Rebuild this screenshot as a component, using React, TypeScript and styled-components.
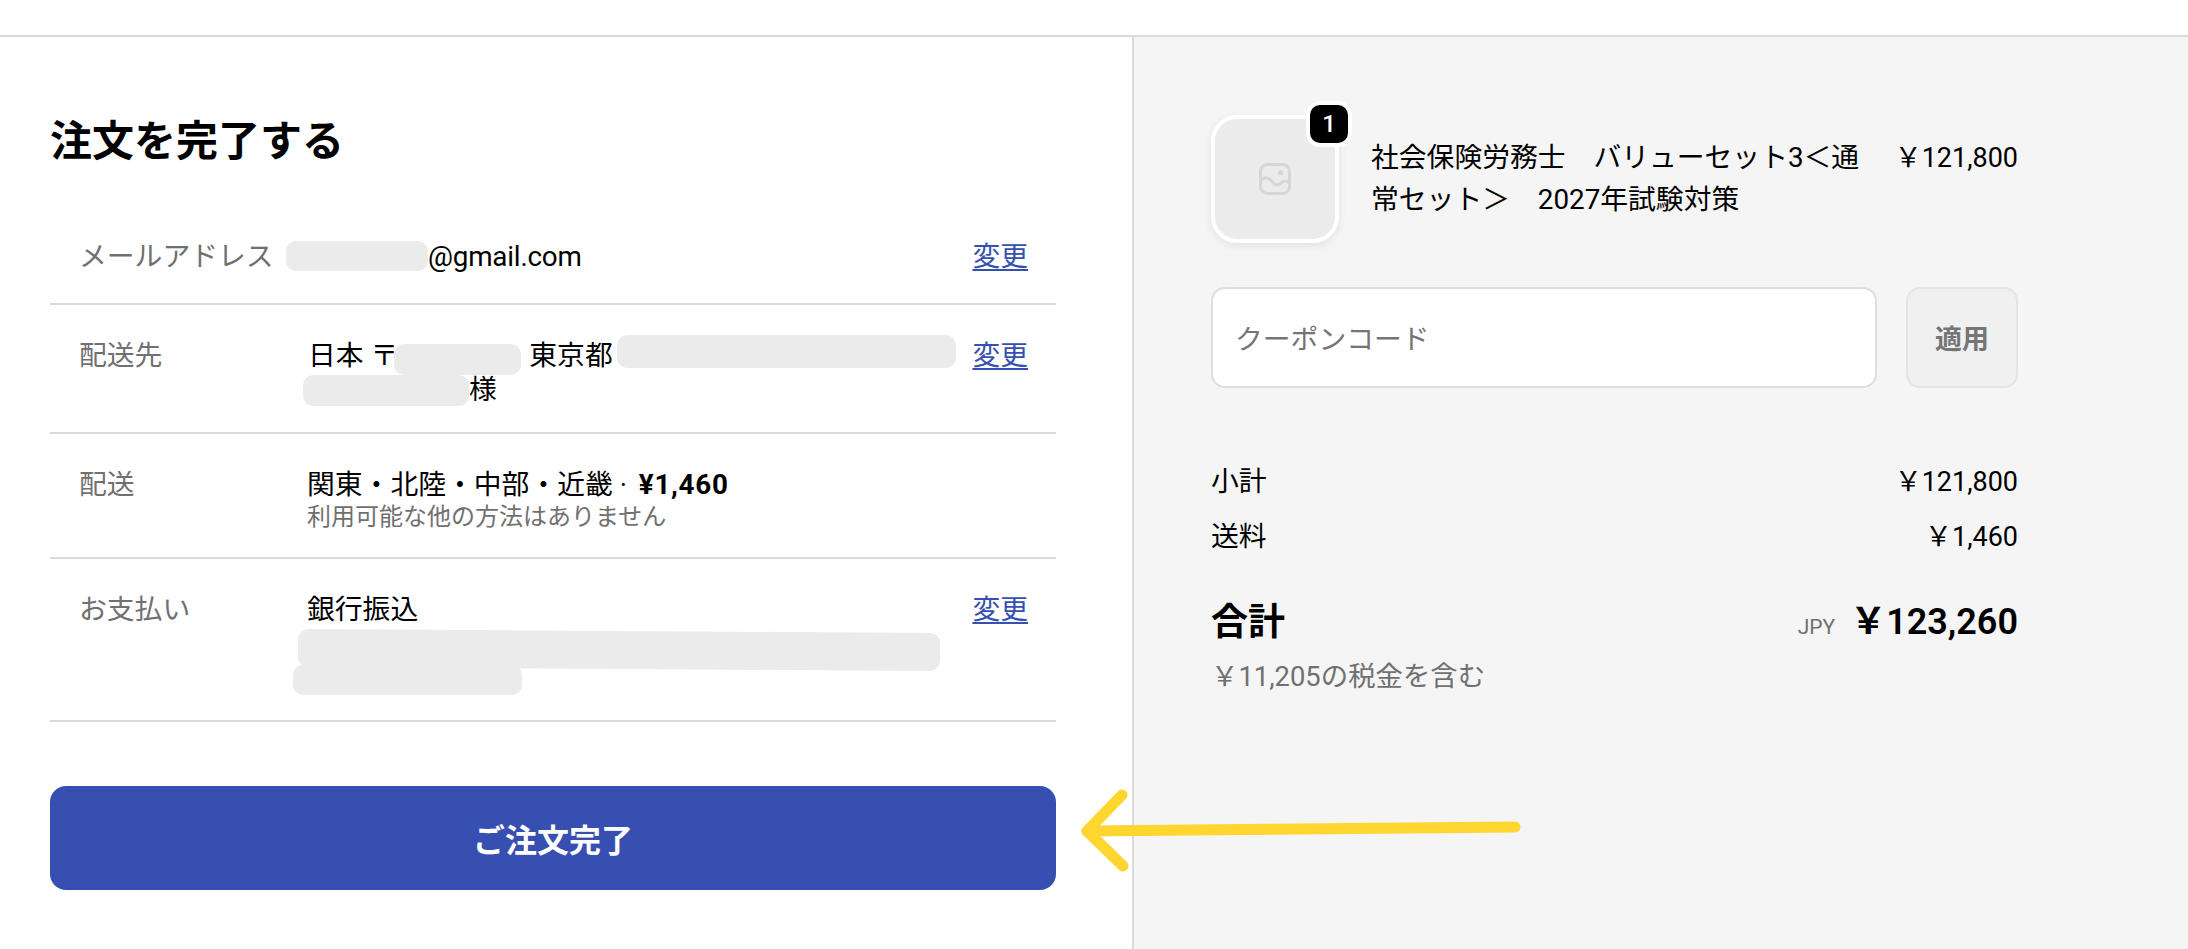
import styled, {createGlobalStyle} from "styled-components";

const GlobalStyle = createGlobalStyle`
  html, body {
    margin: 0;
    padding: 0;
    background: #fff;
  }
  body {
    font-family: Roboto, "Noto Sans CJK JP", sans-serif;
    font-size: 27.8px;
    color: #000;
    overflow: hidden;
  }
`;

const App = () => {
  return (
    <Page>
      <GlobalStyle/>
      <TopBar/>
      <Columns>
        <Main>
          <Title>注文を完了する</Title>
          <Row $top={35} $bottom={29}>
            <Label $width={207}>メールアドレス</Label>
            <Value>
              <Redact $w={142} $h={30} $shift={-3}/><Latin>@gmail.com</Latin>
            </Value>
            <ChangeLink href="#">変更</ChangeLink>
          </Row>
          <Row>
            <Label>配送先</Label>
            <Value>
              <Indent>日本 〒</Indent><Redact $w={127} $h={31} $left={-4} $shift={2}/>
              <Spaced>東京都</Spaced><Redact $w={339} $h={33} $shift={-6}/>
              <br/>
              <Redact $w={166} $h={31} $left={-4} $shift={-1}/>様
            </Value>
            <ChangeLink href="#">変更</ChangeLink>
          </Row>
          <Row>
            <Label>配送</Label>
            <Value>
              関東・北陸・中部・近畿 · <ShippingFee>¥1,460</ShippingFee>
              <Note>利用可能な他の方法はありません</Note>
            </Value>
          </Row>
          <Row>
            <Label>お支払い</Label>
            <Value>
              銀行振込
              <RedactBlock $w={642} $h={38} $left={-9} $top={4} $tilt={0.35}/>
              <RedactBlock $w={229} $h={30} $left={-14} $top={-4}/>
            </Value>
            <ChangeLink href="#">変更</ChangeLink>
          </Row>
          <SubmitButton>ご注文完了</SubmitButton>
        </Main>
        <Aside>
          <Item>
            <Thumb>
              <svg width="32" height="32" viewBox="0 0 32 32" fill="none" stroke="#d6d6d6" strokeWidth="3">
                <rect x="1.5" y="1.5" width="29" height="29" rx="7"/>
                <circle cx="21.5" cy="9.5" r="2.6" fill="#d6d6d6" stroke="none"/>
                <path d="M1.5 18.5C5 13.5 9 13.5 12.5 18C16 23 19 23 22 20C25 17 28 17.5 30.5 20.5"/>
              </svg>
              <Badge>1</Badge>
            </Thumb>
            <ItemInfo>
              <ItemName>社会保険労務士　バリューセット3＜通常セット＞　2027年試験対策</ItemName>
              <Price>￥121,800</Price>
            </ItemInfo>
          </Item>
          <Coupon>
            <CouponInput placeholder="クーポンコード"/>
            <ApplyButton>適用</ApplyButton>
          </Coupon>
          <Summary>
            <SummaryRow>
              <span>小計</span>
              <Price>￥121,800</Price>
            </SummaryRow>
            <SummaryRow>
              <span>送料</span>
              <Price>￥1,460</Price>
            </SummaryRow>
          </Summary>
          <TotalRow>
            <TotalLabel>合計</TotalLabel>
            <TotalAmount>
              <Currency>JPY</Currency>
              <TotalPrice>￥123,260</TotalPrice>
            </TotalAmount>
          </TotalRow>
          <TaxNote>￥11,205の税金を含む</TaxNote>
        </Aside>
      </Columns>
      <Arrow viewBox="0 0 2188 949" fill="none" stroke="#ffd530" strokeWidth="11" strokeLinecap="round" strokeLinejoin="round">
        <path d="M1515 827L1087 831"/>
        <path d="M1122 795L1087 831L1123 866"/>
      </Arrow>
    </Page>
  )
}

export default App;

const Page = styled.div`
  position: relative;
  display: flex;
  flex-direction: column;
  height: 949px;
`;

const TopBar = styled.header`
  flex: 0 0 35px;
  border-bottom: 2px solid #d9d9d9;
`;

const Columns = styled.div`
  flex: 1;
  display: grid;
  grid-template-columns: 1132px 1fr;
`;

const Main = styled.main`
  padding: 75px 76px 0 50px;
`;

const Title = styled.h1`
  margin: 0 0 33px;
  font-size: 42px;
  line-height: 60px;
  font-weight: 700;
`;

const Row = styled.div<{$top?: number; $bottom?: number}>`
  display: flex;
  align-items: flex-start;
  padding: ${p => p.$top ?? 34}px 28px ${p => p.$bottom ?? 25}px 29px;
  line-height: 34px;
  border-bottom: 2px solid #d9d9d9;
`;

const Label = styled.div<{$width?: number}>`
  flex: 0 0 ${p => p.$width ?? 228}px;
  color: #707070;
`;

const Value = styled.div`
  flex: 1;
  white-space: nowrap;
`;

const Latin = styled.span`
  letter-spacing: -0.2px;
`;

const Indent = styled.span`
  margin-left: 1px;
`;

const Spaced = styled.span`
  margin-left: 8px;
  margin-right: 4px;
`;

const ShippingFee = styled.b`
  margin-left: 5px;
  letter-spacing: 0.7px;
`;

const Note = styled.div`
  font-size: 24px;
  line-height: 30px;
  color: #707070;
`;

const ChangeLink = styled.a`
  color: #3650af;
  text-decoration: underline;
  text-underline-offset: 3px;
`;

const Redact = styled.span<{$w: number; $h: number; $left?: number; $shift?: number}>`
  display: inline-block;
  width: ${p => p.$w}px;
  height: ${p => p.$h}px;
  margin: -10px 0 -10px ${p => p.$left ?? 0}px;
  vertical-align: middle;
  background: #ebebeb;
  border-radius: 10px;
  transform: translateY(${p => p.$shift ?? 0}px);
`;

const RedactBlock = styled.div<{$w: number; $h: number; $left: number; $top: number; $tilt?: number}>`
  width: ${p => p.$w}px;
  height: ${p => p.$h}px;
  margin: ${p => p.$top}px 0 0 ${p => p.$left}px;
  background: #ebebeb;
  border-radius: 10px;
  transform: rotate(${p => p.$tilt ?? 0}deg);
`;

const SubmitButton = styled.button`
  display: block;
  width: 100%;
  height: 104px;
  margin-top: 64px;
  border: 0;
  border-radius: 16px;
  background: #364fb0;
  color: #fff;
  font: inherit;
  font-size: 32px;
  font-weight: 700;
`;

const Aside = styled.aside`
  padding: 78px 170px 0 77px;
  background: #f5f5f5;
  border-left: 2px solid #d9d9d9;
`;

const Item = styled.div`
  display: flex;
  align-items: center;
  line-height: 42px;
`;

const Thumb = styled.div`
  position: relative;
  flex: 0 0 128px;
  height: 128px;
  box-sizing: border-box;
  display: flex;
  align-items: center;
  justify-content: center;
  margin-right: 32px;
  background: #ebebeb;
  border: 4px solid #fff;
  border-radius: 26px;
  box-shadow: 0 3px 8px rgba(0, 0, 0, 0.08);
`;

const Badge = styled.div`
  position: absolute;
  top: -18px;
  right: -17px;
  width: 46px;
  height: 46px;
  box-sizing: border-box;
  display: flex;
  align-items: center;
  justify-content: center;
  background: #000;
  border: 4px solid #fff;
  border-radius: 14px;
  color: #fff;
  font-size: 24px;
  font-weight: 500;
`;

const ItemInfo = styled.div`
  flex: 1;
  display: flex;
  align-items: flex-start;
  justify-content: space-between;
`;

const ItemName = styled.div`
  flex: 1;
  margin-right: 15px;
`;

const Price = styled.span`
  font-size: 27px;
  white-space: nowrap;
`;

const Coupon = styled.div`
  display: flex;
  gap: 29px;
  height: 101px;
  margin-top: 44px;
`;

const CouponInput = styled.input`
  flex: 1;
  min-width: 0;
  box-sizing: border-box;
  padding: 4px 22px 0;
  background: #fff;
  border: 2px solid #dedede;
  border-radius: 14px;
  font: inherit;
  outline: none;

  &::placeholder {
    color: #757575;
    opacity: 1;
  }
`;

const ApplyButton = styled.button`
  flex: 0 0 112px;
  background: #f0f0f0;
  border: 2px solid #e4e4e4;
  border-radius: 14px;
  color: #757575;
  font: inherit;
  font-size: 27px;
  font-weight: 700;
`;

const Summary = styled.div`
  display: flex;
  flex-direction: column;
  gap: 21px;
  margin-top: 77px;
  line-height: 34px;
`;

const SummaryRow = styled.div`
  display: flex;
  justify-content: space-between;
`;

const TotalRow = styled.div`
  display: flex;
  justify-content: space-between;
  align-items: center;
  margin-top: 40px;
  line-height: 56px;
`;

const TotalLabel = styled.div`
  padding-bottom: 4px;
  font-size: 37px;
  font-weight: 700;
`;

const TotalAmount = styled.div`
  display: flex;
  align-items: baseline;
  gap: 15px;
`;

const TotalPrice = styled.span`
  font-size: 36px;
  font-weight: 600;
`;

const Currency = styled.span`
  font-size: 21px;
  color: #707070;
`;

const TaxNote = styled.div`
  margin-top: 5px;
  font-size: 27.4px;
  line-height: 34px;
  color: #707070;
`;

const Arrow = styled.svg`
  position: absolute;
  top: 0;
  left: 0;
  width: 2188px;
  height: 949px;
  pointer-events: none;
`;
